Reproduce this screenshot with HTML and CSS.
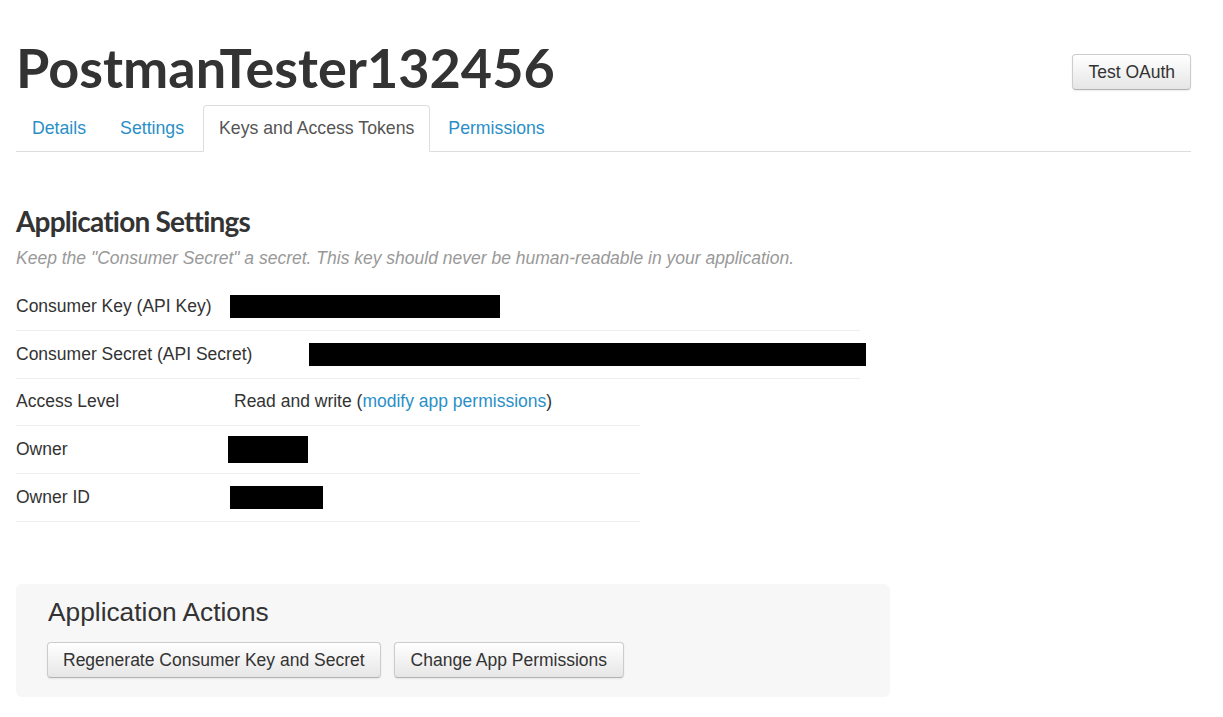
FILE: index.html
```html
<!DOCTYPE html>
<html>
<head>
<meta charset="utf-8">
<link rel="stylesheet" href="styles.css">
</head>
<body>
<div class="page">
  <div class="header">
    <h1 class="app-title">PostmanTester132456</h1>
    <button class="btn btn-oauth">Test OAuth</button>
  </div>
  <ul class="tabs">
    <li><a class="tab">Details</a></li>
    <li><a class="tab">Settings</a></li>
    <li><a class="tab active">Keys and Access Tokens</a></li>
    <li><a class="tab">Permissions</a></li>
  </ul>

  <h2 class="section-title">Application Settings</h2>
  <p class="helper">Keep the "Consumer Secret" a secret. This key should never be human-readable in your application.</p>

  <div class="rows rows-wide">
    <div class="row">
      <span class="label">Consumer Key (API Key)</span>
      <span class="redact r-key"></span>
    </div>
    <div class="row">
      <span class="label">Consumer Secret (API Secret)</span>
      <span class="redact r-secret"></span>
    </div>
  </div>
  <div class="rows rows-narrow">
    <div class="row">
      <span class="label">Access Level</span>
      <span class="value">Read and write (<a class="link">modify app permissions</a>)</span>
    </div>
    <div class="row">
      <span class="label">Owner</span>
      <span class="redact r-owner"></span>
    </div>
    <div class="row">
      <span class="label">Owner ID</span>
      <span class="redact r-ownerid"></span>
    </div>
  </div>

  <div class="actions">
    <h3 class="actions-title">Application Actions</h3>
    <div class="actions-buttons">
      <button class="btn">Regenerate Consumer Key and Secret</button>
      <button class="btn btn-perm">Change App Permissions</button>
    </div>
  </div>
</div>
</body>
</html>
```

FILE: styles.css
```css
* { box-sizing: border-box; }
html, body { margin: 0; padding: 0; background: #fff; }
body {
  font-family: "Liberation Sans", Arial, sans-serif;
  font-size: 17.5px;
  color: #333;
}
.page {
  width: 1175px;
  margin-left: 16px;
}
.header {
  display: flex;
  justify-content: space-between;
  align-items: flex-start;
  padding-top: 31px;
}
.app-title {
  margin: 0;
  font-family: "Lato", "Liberation Sans", sans-serif;
  font-weight: 700;
  font-size: 54px;
  line-height: 73px;
  color: #333;
}
.btn {
  font-family: "Liberation Sans", Arial, sans-serif;
  font-size: 17.5px;
  color: #333;
  height: 36px;
  padding: 0 15px;
  white-space: nowrap;
  border: 1px solid #ccc;
  border-bottom-color: #b3b3b3;
  border-radius: 4px;
  background: linear-gradient(#ffffff, #e6e6e6);
  box-shadow: inset 0 1px 0 rgba(255,255,255,.2), 0 1px 2px rgba(0,0,0,.08);
  cursor: pointer;
}
.btn-oauth {
  margin-top: 23px;
  padding: 0 15px;
}
.btn-perm { padding: 0 16px; }
.tabs {
  list-style: none;
  margin: 1px 0 0 0;
  padding: 0;
  display: flex;
  border-bottom: 1px solid #ddd;
  height: 47px;
  font-size: 17.7px;
}
.tabs li { margin-right: 2px; margin-bottom: -1px; }
.tabs li:nth-child(2) { margin-right: 3px; }
.tab {
  display: block;
  padding: 10px 15px;
  line-height: 25px;
  border: 1px solid transparent;
  border-radius: 4px 4px 0 0;
  color: #2a8fc7;
  text-decoration: none;
}
.tab.active {
  color: #555;
  background: #fff;
  border-color: #ddd;
  border-bottom-color: #fff;
}
.section-title {
  margin: 51px 0 0 0;
  font-family: "Lato", "Liberation Sans", sans-serif;
  font-weight: 700;
  font-size: 28px;
  line-height: 36px;
  color: #333;
  letter-spacing: -0.8px;
}
.helper {
  margin: 7px 0 0 0;
  font-style: italic;
  color: #999;
  line-height: 24px;
}
.rows-wide { width: 844px; margin-top: 13px; }
.rows-narrow { width: 624px; margin-top: -1px; }
.row {
  display: flex;
  align-items: center;
  height: 48px;
  border-bottom: 1px solid #eee;
}
.label { flex: none; }
.link { color: #2a8fc7; text-decoration: none; }
.redact { display: block; background: #000; flex: none; }
.rows-wide .row .label { width: 214px; }
.rows-narrow .row .label { width: 218px; }
.r-key { width: 270px; height: 23px; }
.rows-wide .row:nth-child(2) .label { width: 293px; }
.r-secret { width: 557px; height: 23px; }
.r-owner { width: 80px; height: 27px; margin-left: -6px; }
.r-ownerid { width: 93px; height: 23px; margin-left: -4px; }

.actions {
  margin-top: 62px;
  width: 874px;
  background: #f7f7f7;
  border-radius: 6px;
  padding: 10px 31px 19px 31px;
}
.actions-title {
  margin: 0 0 0 1px;
  font-weight: 400;
  font-size: 26.3px;
  line-height: 36px;
  color: #333;
}
.actions-buttons {
  display: flex;
  gap: 13px;
  margin-top: 12px;
}
```
